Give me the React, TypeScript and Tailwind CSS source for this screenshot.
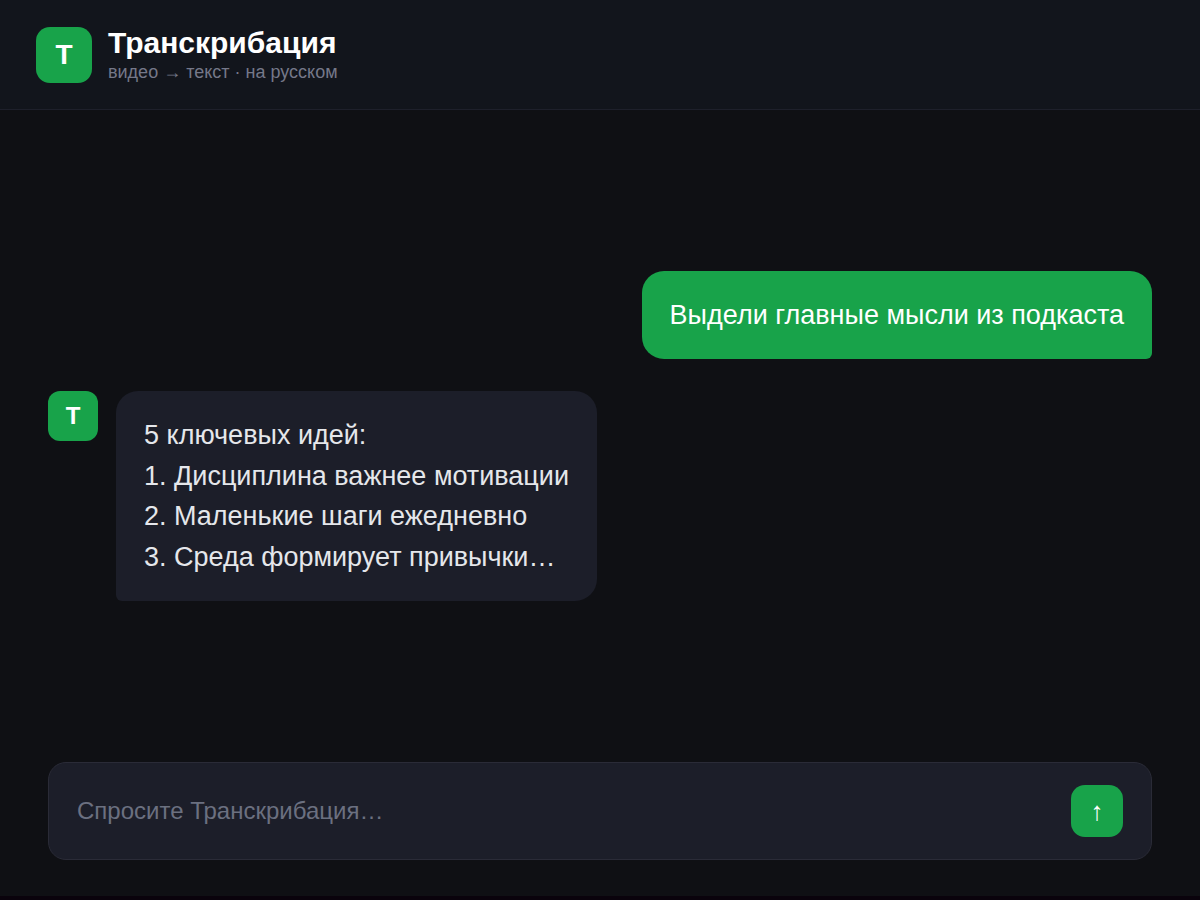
import { useState } from "react";
import type { FormEvent } from "react";

type Message = {
  id: number;
  from: "user" | "bot";
  lines: string[];
};

const MESSAGES: Message[] = [
  { id: 1, from: "user", lines: ["Выдели главные мысли из подкаста"] },
  {
    id: 2,
    from: "bot",
    lines: [
      "5 ключевых идей:",
      "1. Дисциплина важнее мотивации",
      "2. Маленькие шаги ежедневно",
      "3. Среда формирует привычки…",
    ],
  },
];

export default function App() {
  return (
    <div className="flex min-h-screen flex-col border-b-4 border-[#0a030c] bg-[#0f1014] font-['Liberation_Sans',Arial,sans-serif] text-[#e5e7eb]">
      <Header />
      <main className="flex flex-1 flex-col justify-center gap-8 px-12">
        {MESSAGES.map((m) => (
          <MessageRow key={m.id} message={m} />
        ))}
      </main>
      <Composer />
    </div>
  );
}

function Header() {
  return (
    <header className="flex items-center gap-4 border-b border-[#1e202b] bg-[#12151c] px-9 py-[26px]">
      <div className="flex size-14 shrink-0 items-center justify-center rounded-[14px] bg-[#18a34a] text-[28px] font-bold text-white">
        T
      </div>
      <div>
        <h1 className="text-[30px] leading-[34px] font-bold text-white">Транскрибация</h1>
        <p className="mt-0.5 text-lg leading-[21px] text-[#757889]">видео → текст · на русском</p>
      </div>
    </header>
  );
}

function MessageRow({ message }: { message: Message }) {
  if (message.from === "user") {
    return (
      <div className="flex justify-end">
        <div className="rounded-[22px] rounded-br-md bg-[#18a34a] px-7 py-6 text-[27px] leading-normal text-white">
          {message.lines.map((line) => (
            <p key={line}>{line}</p>
          ))}
        </div>
      </div>
    );
  }

  return (
    <div className="flex items-start gap-[18px]">
      <div className="flex size-[50px] shrink-0 items-center justify-center rounded-xl bg-[#18a34a] text-2xl font-bold text-white">
        T
      </div>
      <div className="rounded-[22px] rounded-bl-md bg-[#1c1e29] px-7 py-6 text-[27px] leading-normal">
        {message.lines.map((line) => (
          <p key={line}>{line}</p>
        ))}
      </div>
    </div>
  );
}

function Composer() {
  const [text, setText] = useState("");

  const submit = (e: FormEvent) => {
    e.preventDefault();
    setText("");
  };

  return (
    <form
      onSubmit={submit}
      className="mx-12 mb-9 flex items-center gap-4 rounded-[18px] border border-[#2a2b37] bg-[#1c1e29] px-7 py-[22px]"
    >
      <input
        type="text"
        aria-label="Сообщение"
        placeholder="Спросите Транскрибация…"
        value={text}
        onChange={(e) => setText(e.target.value)}
        className="min-w-0 flex-1 bg-transparent text-2xl outline-none placeholder:text-[#6b7080]"
      />
      <button
        type="submit"
        aria-label="Отправить"
        className="flex size-[52px] shrink-0 items-center justify-center rounded-[14px] bg-[#18a34a] text-[26px] text-white"
      >
        ↑
      </button>
    </form>
  );
}
